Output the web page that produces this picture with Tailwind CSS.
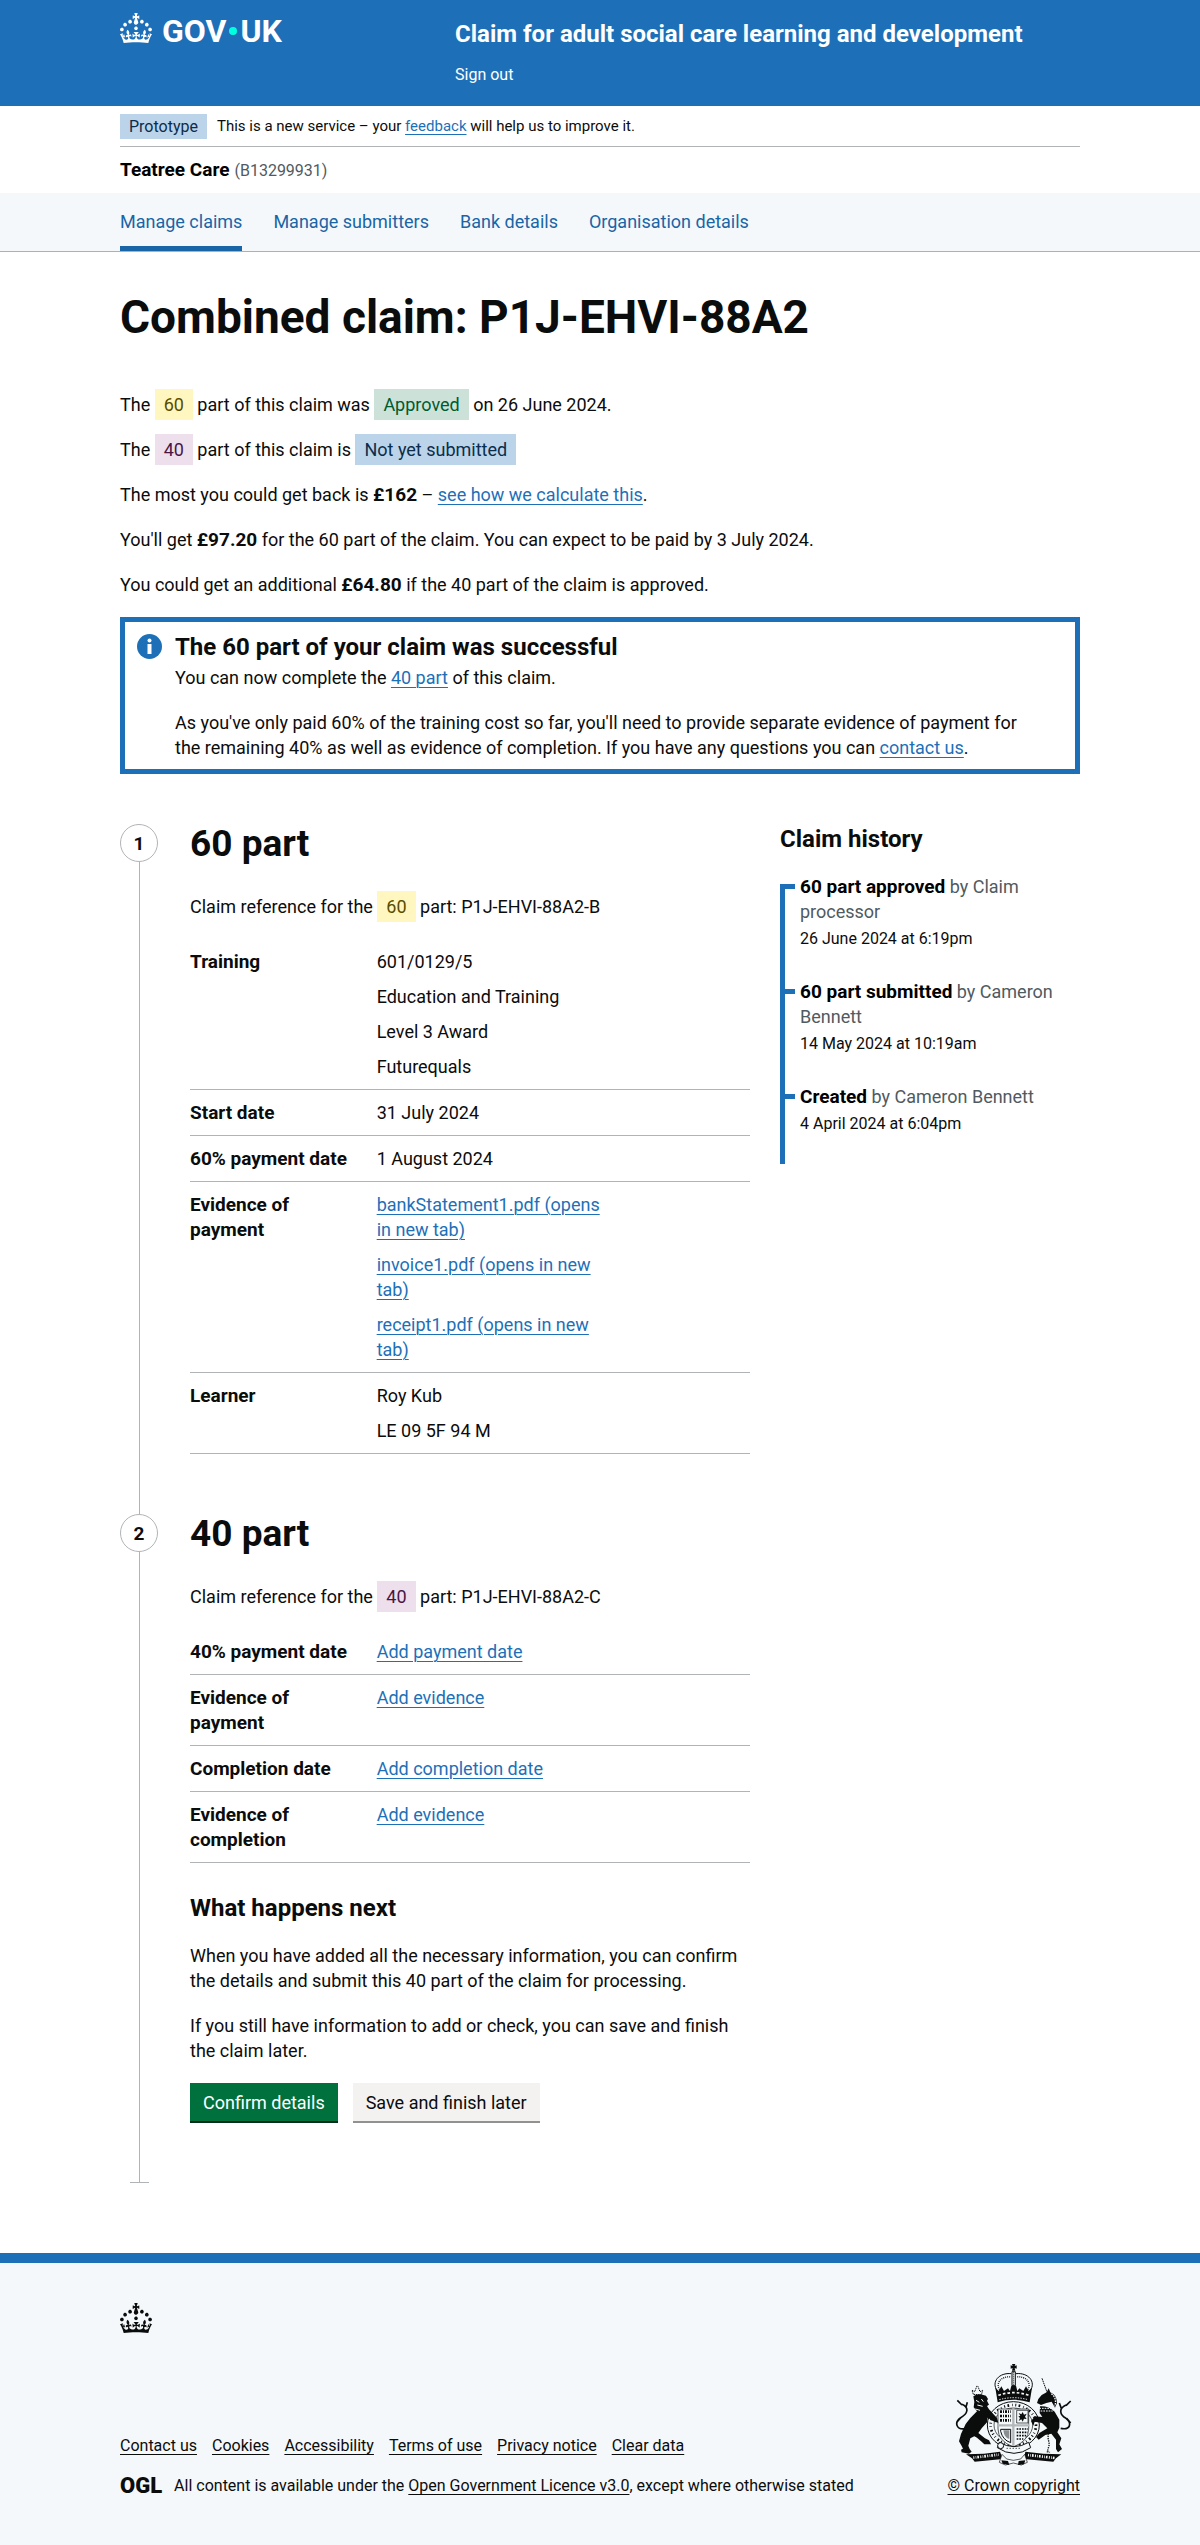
<!DOCTYPE html>
<html lang="en">
<head>
<meta charset="utf-8">
<meta name="viewport" content="width=device-width, initial-scale=1">
<title>Combined claim: P1J-EHVI-88A2</title>
<script src="https://cdn.jsdelivr.net/npm/@tailwindcss/browser@4"></script>
</head>
<body class="bg-[#f4f8fb] font-['Roboto',sans-serif] text-[18px] leading-[25px] text-[#0b0c0c]">

<svg class="hidden" aria-hidden="true">
  <symbol id="crown" viewBox="0 0 32 30">
    <path fill="currentColor" fill-rule="evenodd" d="M22.6 10.4c-1 .4-2-.1-2.4-1-.4-.9.1-2 1-2.4.9-.4 2 .1 2.4 1s-.1 2-1 2.4m-5.9 6.7c-.9.4-2-.1-2.4-1-.4-.9.1-2 1-2.4.9-.4 2 .1 2.4 1s-.1 2-1 2.4m10.8-3.7c-1 .4-2-.1-2.4-1-.4-.9.1-2 1-2.4.9-.4 2 .1 2.4 1s0 2-1 2.4m3.3 4.8c-1 .4-2-.1-2.4-1-.4-.9.1-2 1-2.4.9-.4 2 .1 2.4 1s-.1 2-1 2.4M17 4.7l2.3 1.2V2.5l-2.3.7-.2-.2.9-3h-3.4l.9 3-.2.2c-.1.1-2.3-.7-2.3-.7v3.4L15 4.7c.1.1.1.2.2.2l-1.3 4c-.1.2-.1.4-.1.6 0 1.1.8 2 1.9 2.2h.7c1-.2 1.9-1.1 1.9-2.1 0-.2 0-.4-.1-.6l-1.3-4c-.1-.2 0-.2.1-.3m-7.6 5.7c.9.4 2-.1 2.4-1 .4-.9-.1-2-1-2.4-.9-.4-2 .1-2.4 1s0 2 1 2.4m-5 3c.9.4 2-.1 2.4-1 .4-.9-.1-2-1-2.4-.9-.4-2 .1-2.4 1s.1 2 1 2.4m-3.2 4.8c.9.4 2-.1 2.4-1 .4-.9-.1-2-1-2.4-.9-.4-2 .1-2.4 1s0 2 1 2.4m14.8 11c4.4 0 8.6.3 12.3.8 1.1-4.5 2.4-7 3.7-8.8l-2.5-.9c.2 1.3.3 1.9 0 2.7-.4-.4-.8-1.1-1.1-2.3l-1.2 4c.7-.5 1.3-.8 2-.9-1.1 2.5-2.6 3.1-3.5 3-1.1-.2-1.7-1.2-1.5-2.1.3-1.2 1.5-1.5 2.1-.1 1.1-2.3-.8-3-2-2.3 1.9-1.9 2.1-3.5.6-5.6-2.1 1.6-2.1 3.2-1.2 5.5-1.2-1.4-3.2-.6-2.5 1.6.9-1.4 2.1-.5 1.9.8-.2 1.1-1.7 2.1-3.5 1.9-2.7-.2-2.9-2.1-2.9-3.6.7-.1 1.9.5 2.9 1.9l.4-4.3c-1.1 1.1-2.1 1.4-3.2 1.4.4-1.2 2.1-3 2.1-3h-5.4s1.7 1.9 2.1 3c-1.1 0-2.1-.2-3.2-1.4l.4 4.3c1-1.4 2.2-2 2.9-1.9-.1 1.5-.2 3.4-2.9 3.6-1.9.2-3.4-.8-3.5-1.9-.2-1.3 1-2.2 1.9-.8.7-2.3-1.2-3-2.5-1.6.9-2.2.9-3.9-1.2-5.5-1.5 2-1.3 3.7.6 5.6-1.2-.7-3.1 0-2 2.3.6-1.4 1.8-1.1 2.1.1.2.9-.3 1.9-1.5 2.1-.9.2-2.4-.5-3.5-3 .6 0 1.2.3 2 .9l-1.2-4c-.3 1.1-.7 1.9-1.1 2.3-.3-.8-.2-1.4 0-2.7l-2.9.9C1.3 23 2.6 25.5 3.7 30c3.7-.5 7.9-.8 12.3-.8"/>
  </symbol>
</svg>

<header class="bg-[#1d70b8] text-white">
  <div class="mx-auto grid min-h-[106px] max-w-[1020px] grid-cols-[305fr_625fr] gap-x-[30px] px-[30px]">
    <a href="#" aria-label="GOV.UK" class="flex h-[44px] items-start pt-[13px] text-[32px] leading-[36px] font-bold">
      <svg class="h-[30px] w-[32px]" aria-hidden="true"><use href="#crown"/></svg>
      <span class="ml-[10px]">GOV</span>
      <span class="mx-[3px] mt-[14px] size-[8px] rounded-full bg-[#00ffe0]"></span>
      <span>UK</span>
    </a>
    <div class="pt-[19px]">
      <a href="#" class="block text-[24px] leading-[30px] font-bold">Claim for adult social care learning and development</a>
      <nav class="mt-[16px] text-[16px] leading-[20px]"><a href="#">Sign out</a></nav>
    </div>
  </div>
</header>

<div class="bg-white">
  <div class="mx-auto max-w-[1020px] px-[30px]">
    <div class="flex items-center gap-[10px] border-b border-[#b1b4b6] pt-[8px] pb-[7px] text-[15px] leading-[25px]">
      <strong class="bg-[#bbd4ea] px-[9px] text-[16px] font-normal text-[#0c2d4a]">Prototype</strong>
      <span>This is a new service – your <a href="#" class="text-[#1d70b8] underline decoration-1 underline-offset-[3px]">feedback</a> will help us to improve it.</span>
    </div>
    <p class="flex items-baseline gap-[5px] pt-[10px] pb-[10px] text-[#505a5f]"><strong class="text-[19px] text-black">Teatree Care</strong> <span class="text-[16px]">(B13299931)</span></p>
  </div>
</div>

<nav aria-label="Service" class="border-b border-[#8eb8dc] bg-[#f4f8fb] text-[#1a65a6]">
  <ul class="mx-auto flex max-w-[1020px] gap-[31px] px-[30px]">
    <li class="border-b-[5px] border-[#1a65a6] pt-[16px] pb-[12px]"><a href="#" aria-current="page">Manage claims</a></li>
    <li class="pt-[16px] pb-[17px]"><a href="#">Manage submitters</a></li>
    <li class="pt-[16px] pb-[17px]"><a href="#">Bank details</a></li>
    <li class="pt-[16px] pb-[17px]"><a href="#">Organisation details</a></li>
  </ul>
</nav>

<div class="bg-white">
<main class="mx-auto max-w-[1020px] px-[30px] pt-[40px] pb-[70px]">
  <h1 class="mb-[50px] text-[46px] leading-[50px] font-bold">Combined claim: P1J-EHVI-88A2</h1>

  <div class="flex flex-col gap-[20px]">
    <p>The <span class="inline-block bg-[#fff7bf] px-[9px] -my-[3px] py-[3px] text-[#594d00]">60</span> part of this claim was <span class="inline-block bg-[#cce2d8] px-[9px] -my-[3px] py-[3px] text-[#005a30]">Approved</span> on 26 June 2024.</p>
    <p>The <span class="inline-block bg-[#eedfed] px-[9px] -my-[3px] py-[3px] text-[#491644]">40</span> part of this claim is <span class="inline-block bg-[#bbd4ea] px-[9px] -my-[3px] py-[3px] text-[#0c2d4a]">Not yet submitted</span></p>
    <p>The most you could get back is <strong class="text-[19px] leading-none">£162</strong> – <a href="#" class="text-[#1d70b8] underline decoration-1 underline-offset-[3px]">see how we calculate this</a>.</p>
    <p>You'll get <strong class="text-[19px] leading-none">£97.20</strong> for the 60 part of the claim. You can expect to be paid by 3 July 2024.</p>
    <p>You could get an additional <strong class="text-[19px] leading-none">£64.80</strong> if the 40 part of the claim is approved.</p>
  </div>

  <section class="mt-[20px] mb-[50px] flex gap-[13px] border-[5px] border-[#1d70b8] pt-[10px] pr-[35px] pb-[9px] pl-[12px]">
    <svg class="mt-[2px] size-[25px] shrink-0" viewBox="0 0 50 50" aria-hidden="true">
      <circle cx="25" cy="25" r="25" fill="#1d70b8"/>
      <circle cx="25" cy="13" r="4" fill="#fff"/>
      <path d="M21 20h8v20h-8z" fill="#fff"/>
    </svg>
    <div>
      <h2 class="mb-[3px] text-[24px] leading-[30px] font-bold">The 60 part of your claim was successful</h2>
      <p class="mb-[20px]">You can now complete the <a href="#step-40" class="text-[#1d70b8] underline decoration-1 underline-offset-[3px]">40 part</a> of this claim.</p>
      <p>As you've only paid 60% of the training cost so far, you'll need to provide separate evidence of payment for the remaining 40% as well as evidence of completion. If you have any questions you can <a href="#" class="text-[#1d70b8] underline decoration-1 underline-offset-[3px]">contact us</a>.</p>
    </div>
  </section>

  <div class="grid grid-cols-[minmax(0,21fr)_minmax(0,10fr)] gap-[30px]">
    <div>
      <ol>
        <li class="flex gap-[32px]">
          <div class="flex w-[38px] shrink-0 flex-col items-center">
            <span class="flex size-[38px] items-center justify-center rounded-full border border-[#b1b4b6] text-[19px] font-bold">1</span>
            <span class="w-px flex-1 bg-[#b1b4b6]"></span>
          </div>
          <section class="min-w-0 flex-1 pb-[60px]">
            <h2 class="mb-[30px] text-[37px] leading-[40px] font-bold">60 part</h2>
            <p class="mb-[20px]">Claim reference for the <span class="inline-block bg-[#fff7bf] px-[9px] -my-[3px] py-[3px] text-[#594d00]">60</span> part: P1J-EHVI-88A2-B</p>
            <dl>
              <div class="flex border-b border-[#b1b4b6] py-[10px]">
                <dt class="w-1/3 pr-[25px] text-[19px] font-bold">Training</dt>
                <dd class="flex w-[42%] flex-col gap-[10px]"><p>601/0129/5</p><p>Education and Training</p><p>Level 3 Award</p><p>Futurequals</p></dd>
              </div>
              <div class="flex border-b border-[#b1b4b6] py-[10px]">
                <dt class="w-1/3 pr-[25px] text-[19px] font-bold">Start date</dt>
                <dd class="w-[42%]">31 July 2024</dd>
              </div>
              <div class="flex border-b border-[#b1b4b6] py-[10px]">
                <dt class="w-1/3 pr-[25px] text-[19px] font-bold">60% payment date</dt>
                <dd class="w-[42%]">1 August 2024</dd>
              </div>
              <div class="flex border-b border-[#b1b4b6] py-[10px]">
                <dt class="w-1/3 pr-[25px] text-[19px] font-bold">Evidence of payment</dt>
                <dd class="flex w-[42%] flex-col gap-[10px]">
                  <p><a href="#" class="text-[#1d70b8] underline decoration-1 underline-offset-[3px]">bankStatement1.pdf (opens in new tab)</a></p>
                  <p><a href="#" class="text-[#1d70b8] underline decoration-1 underline-offset-[3px]">invoice1.pdf (opens in new tab)</a></p>
                  <p><a href="#" class="text-[#1d70b8] underline decoration-1 underline-offset-[3px]">receipt1.pdf (opens in new tab)</a></p>
                </dd>
              </div>
              <div class="flex border-b border-[#b1b4b6] py-[10px]">
                <dt class="w-1/3 pr-[25px] text-[19px] font-bold">Learner</dt>
                <dd class="flex w-[42%] flex-col gap-[10px]"><p>Roy Kub</p><p>LE 09 5F 94 M</p></dd>
              </div>
            </dl>
          </section>
        </li>
        <li id="step-40" class="flex gap-[32px]">
          <div class="flex w-[38px] shrink-0 flex-col items-center">
            <span class="flex size-[38px] items-center justify-center rounded-full border border-[#b1b4b6] text-[19px] font-bold">2</span>
            <span class="w-px flex-1 bg-[#b1b4b6]"></span>
            <span class="h-px w-[19px] bg-[#b1b4b6]"></span>
          </div>
          <section class="min-w-0 flex-1 pb-[60px]">
            <h2 class="mb-[30px] text-[37px] leading-[40px] font-bold">40 part</h2>
            <p class="mb-[20px]">Claim reference for the <span class="inline-block bg-[#eedfed] px-[9px] -my-[3px] py-[3px] text-[#491644]">40</span> part: P1J-EHVI-88A2-C</p>
            <dl>
              <div class="flex border-b border-[#b1b4b6] py-[10px]">
                <dt class="w-1/3 pr-[25px] text-[19px] font-bold">40% payment date</dt>
                <dd><a href="#" class="text-[#1d70b8] underline decoration-1 underline-offset-[3px]">Add payment date</a></dd>
              </div>
              <div class="flex border-b border-[#b1b4b6] py-[10px]">
                <dt class="w-1/3 pr-[25px] text-[19px] font-bold">Evidence of payment</dt>
                <dd><a href="#" class="text-[#1d70b8] underline decoration-1 underline-offset-[3px]">Add evidence</a></dd>
              </div>
              <div class="flex border-b border-[#b1b4b6] py-[10px]">
                <dt class="w-1/3 pr-[25px] text-[19px] font-bold">Completion date</dt>
                <dd><a href="#" class="text-[#1d70b8] underline decoration-1 underline-offset-[3px]">Add completion date</a></dd>
              </div>
              <div class="flex border-b border-[#b1b4b6] py-[10px]">
                <dt class="w-1/3 pr-[25px] text-[19px] font-bold">Evidence of completion</dt>
                <dd><a href="#" class="text-[#1d70b8] underline decoration-1 underline-offset-[3px]">Add evidence</a></dd>
              </div>
            </dl>
            <h3 class="mt-[30px] mb-[20px] text-[24px] leading-[30px] font-bold">What happens next</h3>
            <p class="mb-[20px]">When you have added all the necessary information, you can confirm the details and submit this 40 part of the claim for processing.</p>
            <p class="mb-[20px]">If you still have information to add or check, you can save and finish the claim later.</p>
            <div class="flex gap-[15px]">
              <button type="button" class="h-[40px] border-b-2 border-[#002d18] bg-[#00703c] px-[13px] text-white">Confirm details</button>
              <button type="button" class="h-[40px] border-b-2 border-[#929191] bg-[#f3f2f1] px-[13px]">Save and finish later</button>
            </div>
          </section>
        </li>
      </ol>
    </div>

    <aside>
      <h2 class="mb-[20px] text-[24px] leading-[30px] font-bold">Claim history</h2>
      <div class="flex">
        <span aria-hidden="true" class="mt-[10px] w-[5px] shrink-0 bg-[#1d70b8]"></span>
        <ol class="flex-1">
          <li class="flex gap-[5px] pb-[30px]">
            <span class="mt-[10px] h-[5px] w-[10px] shrink-0 bg-[#1d70b8]"></span>
            <div><p class="text-[#505a5f]"><strong class="text-[19px] leading-none text-black">60 part approved</strong> by Claim processor</p><p class="mt-[5px] text-[16px] leading-[20px]">26 June 2024 at 6:19pm</p></div>
          </li>
          <li class="flex gap-[5px] pb-[30px]">
            <span class="mt-[10px] h-[5px] w-[10px] shrink-0 bg-[#1d70b8]"></span>
            <div><p class="text-[#505a5f]"><strong class="text-[19px] leading-none text-black">60 part submitted</strong> by Cameron Bennett</p><p class="mt-[5px] text-[16px] leading-[20px]">14 May 2024 at 10:19am</p></div>
          </li>
          <li class="flex gap-[5px] pb-[30px]">
            <span class="mt-[10px] h-[5px] w-[10px] shrink-0 bg-[#1d70b8]"></span>
            <div><p class="text-[#505a5f]"><strong class="text-[19px] leading-none text-black">Created</strong> by Cameron Bennett</p><p class="mt-[5px] text-[16px] leading-[20px]">4 April 2024 at 6:04pm</p></div>
          </li>
        </ol>
      </div>
    </aside>
  </div>
</main>
</div>

<footer class="border-t-[10px] border-[#1d70b8] text-[16px] leading-[20px]">
  <div class="mx-auto max-w-[1020px] px-[30px] pt-[40px] pb-[50px]">
    <svg class="h-[30px] w-[32px]" aria-hidden="true"><use href="#crown"/></svg>
    <div class="mt-[30px] flex items-end justify-between">
      <div>
        <ul class="mb-[20px] flex flex-wrap gap-x-[15px]">
          <li><a href="#" class="underline decoration-1 underline-offset-[3px]">Contact us</a></li>
          <li><a href="#" class="underline decoration-1 underline-offset-[3px]">Cookies</a></li>
          <li><a href="#" class="underline decoration-1 underline-offset-[3px]">Accessibility</a></li>
          <li><a href="#" class="underline decoration-1 underline-offset-[3px]">Terms of use</a></li>
          <li><a href="#" class="underline decoration-1 underline-offset-[3px]">Privacy notice</a></li>
          <li><a href="#" class="underline decoration-1 underline-offset-[3px]">Clear data</a></li>
        </ul>
        <div class="flex items-center gap-[12px]">
          <span class="text-[22px] leading-[20px] font-black">OGL</span>
          <span>All content is available under the <a href="#" class="underline decoration-1 underline-offset-[3px]">Open Government Licence v3.0</a>, except where otherwise stated</span>
        </div>
      </div>
      <a href="#" class="flex flex-col items-center underline decoration-1 underline-offset-[3px]">
        <svg class="mb-[10px] h-[103px] w-[117px]" viewBox="171 66 351 309" fill="#0b0c0c" aria-hidden="true">
          <!-- crown -->
          <path d="M342 69h10l-2 6 6-2v10l-6-2 2 8h-10l2-8-6 2V73l6 2z"/>
          <path d="M342 92h10v42h-10z" fill="none" stroke="#0b0c0c" stroke-width="3"/>
          <path d="M347 94v40" fill="none" stroke="#0b0c0c" stroke-width="3" stroke-dasharray="3 3"/>
          <path d="M298 150c-20-28 6-56 42-52M396 150c20-28-6-56-42-52" fill="none" stroke="#0b0c0c" stroke-width="3"/>
          <path d="M305 146c-14-22 8-42 34-38M389 146c14-22-8-42-34-38" fill="none" stroke="#0b0c0c" stroke-width="4" stroke-dasharray="3 3"/>
          <path d="M292 140l10 10 8-14 8 14 12-8 6 8 4-16h14l4 16 6-8 12 8 8-14 8 14 10-10-7 44c-32-10-64-10-96 0z"/>
          <path d="M301 163q46-16 92 0" fill="none" stroke="#f4f8fb" stroke-width="5" stroke-dasharray="8 6"/>
          <path d="M304 176q43-12 86 0" fill="none" stroke="#f4f8fb" stroke-width="3" stroke-dasharray="4 4"/>
          <!-- garter and shield -->
          <ellipse cx="346" cy="252" rx="78" ry="70" fill="#f4f8fb" stroke="#0b0c0c" stroke-width="3"/>
          <ellipse cx="346" cy="252" rx="68" ry="60" fill="none" stroke="#0b0c0c" stroke-width="8" stroke-dasharray="3 7 5 9 2 8"/>
          <ellipse cx="346" cy="252" rx="58" ry="51" fill="#f4f8fb" stroke="#0b0c0c" stroke-width="2"/>
          <path d="M300 204h92v60q0 36-46 54-46-18-46-54z" fill="#f4f8fb" stroke="#0b0c0c" stroke-width="2"/>
          <path d="M306 212h32M306 225h32M306 238h32" fill="none" stroke="#0b0c0c" stroke-width="8" stroke-dasharray="6 3 3 3"/>
          <path d="M356 208h34v38h-34z" fill="none" stroke="#0b0c0c" stroke-width="2"/>
          <path d="M362 216l8 4 4-7 4 8 8-3-5 9 5 7-8-1-4 9-4-7-8 5 4-9-5-5 6-1z"/>
          <path d="M308 265h30v40q-24-8-30-34z" fill="none" stroke="#0b0c0c" stroke-width="3"/>
          <path d="M316 268h18v26q-16-4-18-26z" fill="#8b8e90"/>
          <path d="M356 264h34M356 274h33M356 284h28M356 294h20" fill="none" stroke="#0b0c0c" stroke-width="5" stroke-dasharray="5 3"/>
          <path d="M346 202v116M298 253h96" stroke="#b4b7b9" stroke-width="7"/>
          <!-- lion -->
          <path d="M226 160l-4-12 8 4 4-10 2-6 4 0 2 6 4 10 8-4-4 14z" fill="none" stroke="#0b0c0c" stroke-width="3" stroke-dasharray="4 2"/>
          <path d="M226 166q14-12 38-2l6 10-3 5 6 12-6 4 6 10 24 26 4 14-12-3-20-12-2 14-16 18-10 14 20 16 12 6 6 12-20 0-8-8-14-12-8-4-12 6-6 22 4 10 6 8-8 6-22-4-2-8 6-3-4-8-8-14 6-22 14-30 14-18 20-20-10-12 2-16z"/>
          <path d="M234 178l10 6M250 174l6 8M238 192l16 4M232 204l14 4" stroke="#f4f8fb" stroke-width="3"/>
          <path d="M206 262c-32 8-38-18-18-32 22-12 26-30 4-40M192 192l-14-14M204 198l4-14M188 230l-12 14" fill="none" stroke="#0b0c0c" stroke-width="5"/>
          <!-- unicorn -->
          <path d="M432 112l16 44" stroke="#0b0c0c" stroke-width="3" stroke-dasharray="5 2"/>
          <path d="M446 154l6-12 5 12q20 8 20 32l-6 14-10-18-16 4-16 6-12-6 4-12 10-12z"/>
          <path d="M460 158q18 14 10 38" fill="none" stroke="#f4f8fb" stroke-width="4" stroke-dasharray="5 3"/>
          <path d="M426 196q24-2 44 16l14 24 0 24-6 14 12 18-6 18 8 14-12 10-6-10 0-28-14-18-18 4-20 14-8-8 10-12 24-14-16-16-22-4-4 12-7-14 12-14 22 2-8-12z"/>
          <path d="M424 202h36M428 210h36" stroke="#f4f8fb" stroke-width="3" stroke-dasharray="5 3"/>
          <path d="M488 262c30 6 34-16 16-30-20-12-22-30 0-40M504 194l14-14M490 202l-6-16M506 232l12 14" fill="none" stroke="#0b0c0c" stroke-width="5"/>
          <path d="M452 270l-2 20 4 20-6 22 8 2" fill="none" stroke="#0b0c0c" stroke-width="4" stroke-dasharray="4 3"/>
          <!-- buckle and motto scroll -->
          <path d="M304 304q44 26 88 0l6 16q-50 34-100 0z" fill="#f4f8fb" stroke="#0b0c0c" stroke-width="3"/>
          <circle cx="308" cy="314" r="9" fill="#f4f8fb" stroke="#0b0c0c" stroke-width="3"/>
          <path d="M326 322h44" stroke="#0b0c0c" stroke-width="3" stroke-dasharray="3 6"/>
          <path d="M204 340l54-2 48-6 8 22-84 8-8-10zM490 340l-54-2-54-6-4 22 88 8 8-10z"/>
          <path d="M226 350l76-9M390 342l80 9" stroke="#f4f8fb" stroke-width="8" stroke-dasharray="3 4 2 3 5 4"/>
          <path d="M312 340l14 14 20 4 22-4 12-14 8 24-18 8-24-6-24 6-18-8z" fill="#f4f8fb" stroke="#0b0c0c" stroke-width="2"/>
          <path d="M310 358l20 2 4 12-20-4zM362 360l20-2-4 12-18 2z"/>
        </svg>
        © Crown copyright
      </a>
    </div>
  </div>
</footer>
</body>
</html>
